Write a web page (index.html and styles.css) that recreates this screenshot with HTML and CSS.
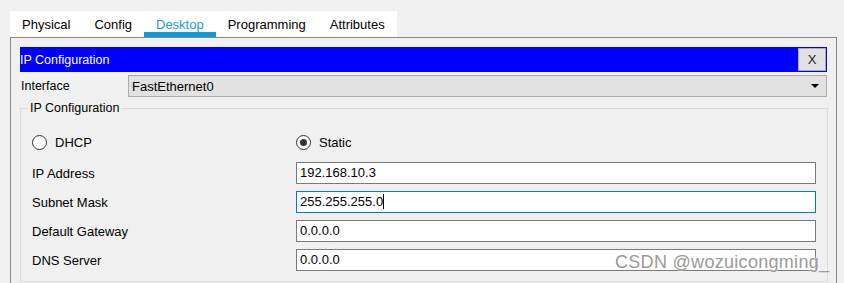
FILE: index.html
```html
<!DOCTYPE html>
<html lang="en">
<head>
    <meta charset="UTF-8">
    <title>PC - Desktop - IP Configuration</title>
    <link rel="stylesheet" href="styles.css">
</head>
<body>

<div class="tabs">
    <div class="tab">Physical</div>
    <div class="tab">Config</div>
    <div class="tab active">Desktop</div>
    <div class="tab">Programming</div>
    <div class="tab">Attributes</div>
</div>

<div class="panel">
    <!-- title bar -->
    <div class="titlebar">
        <span class="title">IP Configuration</span>
        <div class="close-btn">X</div>
    </div>

    <div class="iface-row">
        <label>Interface</label>
        <div class="select">
            <span>FastEthernet0</span>
            <span class="arrow"></span>
        </div>
    </div>

    <fieldset class="group">
        <legend>IP Configuration</legend>

        <div class="radio-row">
            <div class="radio-item dhcp">
                <span class="radio"></span>
                <span>DHCP</span>
            </div>
            <div class="radio-item">
                <span class="radio checked"></span>
                <span>Static</span>
            </div>
        </div>

        <div class="field">
            <label>IP Address</label>
            <div class="textbox">192.168.10.3</div>
        </div>
        <div class="field">
            <label>Subnet Mask</label>
            <div class="textbox focused">255.255.255.0<span class="caret"></span></div>
        </div>
        <div class="field">
            <label>Default Gateway</label>
            <div class="textbox">0.0.0.0</div>
        </div>
        <div class="field">
            <label>DNS Server</label>
            <div class="textbox">0.0.0.0</div>
        </div>
    </fieldset>
</div>

<div class="watermark">CSDN @wozuicongming_</div>

</body>
</html>
```

FILE: styles.css
```css
body {
    font-family: "Liberation Sans", Arial, sans-serif;
    font-size: 13px;
    background-color: #f0f0f0;
    color: #000;
    margin: 0;
    padding: 0;
    overflow: hidden;
}

.tabs {
    display: flex;
    width: 387px;
    height: 26px;
    margin: 11px 0 0 10px;
    background-color: #fff;
}

.tab {
    padding: 0 12px;
    font-size: 13px;
    line-height: 27px;
    box-sizing: border-box;
    height: 26px;
}

.tab.active {
    color: #1a9bd7;
    border-bottom: 5px solid #0d9ad6;
}

.panel {
    margin: 0 0 0 10px;
    width: 827px;
    height: 260px;
    box-sizing: border-box;
    border: 1px solid #888;
    border-bottom: none;
    padding: 9px 9px 0 9px;
}

.titlebar {
    display: flex;
    align-items: center;
    justify-content: space-between;
    height: 25px;
    background-color: #0000ff;
    padding: 0 1px 0 0;
    box-sizing: border-box;
}

.title {
    color: #fff;
    font-size: 12.5px;
}

.close-btn {
    width: 28px;
    height: 23px;
    box-sizing: border-box;
    background-color: #e1e1e1;
    border: 1px solid #adadad;
    text-align: center;
    line-height: 21px;
    font-size: 13px;
    color: #222;
}

.iface-row {
    display: flex;
    align-items: center;
    margin-top: 3px;
    height: 22px;
}

.iface-row label {
    width: 108px;
    padding-left: 1px;
    box-sizing: border-box;
    font-size: 12.5px;
}

.select {
    flex: 1;
    height: 22px;
    box-sizing: border-box;
    background-color: #e1e1e1;
    border: 1px solid #adadad;
    display: flex;
    align-items: center;
    justify-content: space-between;
    padding: 0 7px 0 3px;
}

.arrow {
    width: 0;
    height: 0;
    border-left: 4px solid transparent;
    border-right: 4px solid transparent;
    border-top: 4px solid #000;
}

.group {
    margin: 4px 0 0 0;
    width: 808px;
    height: 181px;
    box-sizing: border-box;
    border: 1px solid #dcdcdc;
    padding: 0 11px 0 11px;
}

.group legend {
    padding: 0 2px;
    margin-left: -4px;
    font-size: 12.5px;
}

.radio-row {
    display: flex;
    align-items: center;
    height: 22px;
    margin-top: 16px;
}

.radio-item {
    display: flex;
    align-items: center;
    gap: 8px;
}

.radio-item.dhcp {
    width: 264px;
}

.radio {
    width: 15px;
    height: 15px;
    box-sizing: border-box;
    border: 1px solid #333;
    border-radius: 50%;
    background-color: #fff;
    position: relative;
}

.radio.checked::after {
    content: "";
    position: absolute;
    left: 3px;
    top: 3px;
    width: 7px;
    height: 7px;
    border-radius: 50%;
    background-color: #333;
}

.field {
    display: flex;
    align-items: center;
    margin-top: 7px;
}

.radio-row + .field {
    margin-top: 9px;
}

.field label {
    width: 264px;
}

.textbox {
    flex: 1;
    height: 22px;
    box-sizing: border-box;
    background-color: #fff;
    border: 1px solid #7a7a7a;
    padding-left: 3px;
    line-height: 20px;
}

.textbox.focused {
    border-color: #0078d7;
}

.caret {
    display: inline-block;
    width: 1px;
    height: 15px;
    background-color: #000;
    vertical-align: -3px;
}

.watermark {
    position: absolute;
    left: 615px;
    top: 252px;
    font-size: 18px;
    line-height: 20px;
    color: #9a9a9a;
    text-shadow: 0 0 1px #fff, 0 0 2px #fff;
    letter-spacing: 0.3px;
}
```
